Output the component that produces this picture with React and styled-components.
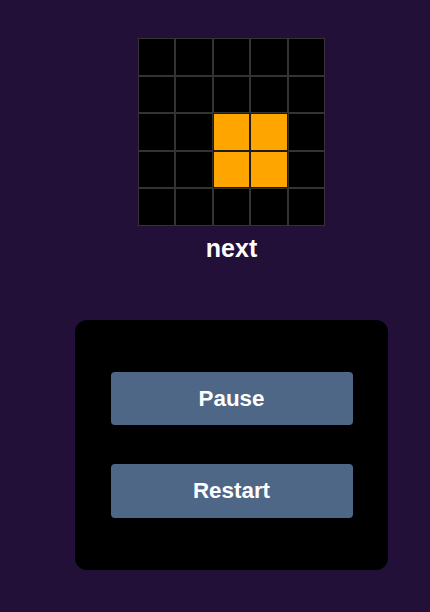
import React from "react";
import styled, { createGlobalStyle } from "styled-components";

const Global = createGlobalStyle`
  html, body {
    margin: 0;
    padding: 0;
    background: #221038;
  }
  body {
    font-family: "Liberation Sans", Arial, sans-serif;
  }
`;

const Page = styled.div`
  min-height: 100vh;
  box-sizing: border-box;
  padding: 38px 0 0 33px;
  display: flex;
  flex-direction: column;
  align-items: center;
`;

const NextGrid = styled.div`
  display: grid;
  grid-template-columns: repeat(5, 37.6px);
  grid-auto-rows: 37.6px;
`;

const Cell = styled.div`
  box-sizing: border-box;
  border: 1px solid ${(p) => (p.$filled ? "#1c1c1c" : "#333")};
  background: ${(p) => (p.$filled ? "#ffa500" : "#000")};
`;

const Label = styled.div`
  margin-top: 8px;
  font-size: 25px;
  line-height: 28px;
  font-weight: 700;
  color: #fff;
`;

const Panel = styled.div`
  margin-top: 58px;
  width: 313px;
  height: 250px;
  box-sizing: border-box;
  background: #000;
  border-radius: 12px;
  padding: 52px 36px;
  display: flex;
  flex-direction: column;
  align-items: center;
  gap: 39px;
`;

const Button = styled.button`
  width: 242px;
  height: 54px;
  border: none;
  border-radius: 4px;
  background: #4e6787;
  color: #fff;
  font-family: "Liberation Sans", Arial, sans-serif;
  font-size: 22.4px;
  font-weight: 700;
  cursor: pointer;
  padding: 0;
`;

const filled = new Set(["2-2", "2-3", "3-2", "3-3"]);

export default function App() {
  const cells = [];
  for (let r = 0; r < 5; r++) {
    for (let c = 0; c < 5; c++) {
      cells.push(<Cell key={`${r}-${c}`} $filled={filled.has(`${r}-${c}`)} />);
    }
  }
  return (
    <>
      <Global />
      <Page>
        <NextGrid>{cells}</NextGrid>
        <Label>next</Label>
        <Panel>
          <Button>Pause</Button>
          <Button>Restart</Button>
        </Panel>
      </Page>
    </>
  );
}
